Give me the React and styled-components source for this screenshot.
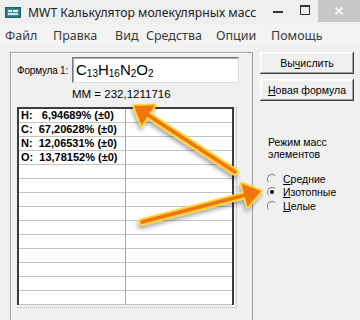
import React from "react";
import styled, { createGlobalStyle } from "styled-components";

const Global = createGlobalStyle`
  html, body { margin: 0; padding: 0; background: #f0f0f0; }
  #root { width: 360px; height: 320px; }
`;

const Window = styled.div`
  position: relative;
  width: 360px;
  height: 320px;
  overflow: hidden;
  background: #f0f0f0;
  display: flex;
  flex-direction: column;
  font-family: "Liberation Sans", Arial, sans-serif;
  color: #000;
`;

const TitleBar = styled.div`
  height: 24px;
  flex: none;
  display: flex;
  align-items: center;
  background: #efefef;
`;

const AppIcon = styled.svg`
  margin-left: 5px;
  width: 16px;
  height: 11px;
  flex: none;
`;

const Title = styled.div`
  margin-left: 7px;
  font-family: "Noto Sans", sans-serif;
  font-size: 12.2px;
  color: #222;
  white-space: nowrap;
  flex: 1;
`;

const CtrlBtn = styled.div`
  width: ${(p) => p.$w}px;
  height: 22px;
  align-self: flex-start;
  display: flex;
  align-items: center;
  justify-content: center;
  background: ${(p) => (p.$close ? "#c7c7c7" : "transparent")};
`;

const MinGlyph = styled.div`
  width: 10px;
  height: 2px;
  background: #333;
  margin-top: 2px;
`;

const MaxGlyph = styled.div`
  width: 8px;
  height: 7px;
  border: 1px solid #333;
  border-top-width: 2px;
  margin-top: -2px;
`;

const CloseGlyph = styled.svg`
  width: 8px;
  height: 8px;
`;

const MenuBar = styled.div`
  height: 22px;
  flex: none;
  display: flex;
  align-items: center;
  padding-left: 5px;
  background: #f3f3f3;
  font-family: "Noto Sans", sans-serif;
  font-size: 12.5px;
  color: #3a3a3a;
`;

const MenuItem = styled.span`
  width: ${(p) => (p.$w ? `${p.$w}px` : "auto")};
  flex: none;
  white-space: nowrap;
`;

const Client = styled.div`
  flex: 1;
  display: flex;
  padding-top: 6px;
  padding-left: 10px;
  font-size: 10.5px;
`;

const LeftFrame = styled.div`
  width: 235px;
  border: 1px solid #a0a0a0;
  border-bottom: none;
  box-shadow: inset 1px 1px #fff;
  padding: 4px 0 0 6px;
  display: flex;
  flex-direction: column;
`;

const FormulaRow = styled.div`
  display: flex;
  align-items: center;
`;

const FieldLabel = styled.label`
  width: 55px;
  flex: none;
  font-size: 10px;
  letter-spacing: -0.2px;
  white-space: nowrap;
`;

const FormulaInput = styled.div`
  width: 162px;
  height: 24px;
  background: #fff;
  border: 1px solid;
  border-color: #7a7a7a #dcdcdc #dcdcdc #7a7a7a;
  box-shadow: inset 1px 1px #a8a8a8;
  padding: 0 0 0 3px;
  font-size: 15px;
  line-height: 23px;
  white-space: nowrap;
  sub {
    font-size: 10px;
    vertical-align: -2px;
    line-height: 0;
  }
`;

const MassLine = styled.div`
  margin: 4px 0 0 55px;
  height: 14px;
  line-height: 14px;
  font-size: 11.5px;
  white-space: nowrap;
`;

const GridWrap = styled.div`
  margin-top: 6px;
  width: 219px;
  border-right: 1px dotted #b0b0b0;
  border-bottom: 1px dotted #b0b0b0;
  padding-bottom: 2px;
`;

const Grid = styled.div`
  width: 213px;
  display: grid;
  grid-template-columns: 1fr 1fr;
  background: #fff;
  border: 2px solid #3c3c3c;
  border-bottom: none;
`;

const Cell = styled.div`
  height: 13px;
  border-bottom: 1px solid #c4c4c4;
  border-right: ${(p) => (p.$first ? "1px solid #a8a8a8" : "none")};
  padding-left: 2px;
  font-size: 11px;
  font-weight: bold;
  line-height: 13px;
  white-space: pre;
  overflow: hidden;
`;

const RightPanel = styled.div`
  margin-left: 7px;
  width: 94px;
  display: flex;
  flex-direction: column;
`;

const PushButton = styled.button`
  width: 94px;
  height: 22px;
  margin-bottom: 5px;
  padding: 0;
  background: #f0f0f0;
  border: none;
  box-shadow: inset -1px -1px #404040, inset 1px 1px #fff, inset -2px -2px #a0a0a0, inset 2px 2px #f8f8f8;
  font-family: "Liberation Sans", Arial, sans-serif;
  font-size: 10.5px;
  color: #000;
  u { text-decoration: underline; text-underline-offset: 1px; }
`;

const ModeLabel = styled.div`
  margin: 30px 0 0 8px;
  font-size: 10.5px;
  line-height: 12px;
`;

const RadioList = styled.div`
  margin: 12px 0 0 7px;
  display: flex;
  flex-direction: column;
`;

const RadioRow = styled.div`
  height: 13.5px;
  display: flex;
  align-items: center;
  font-size: 10.5px;
  u { text-decoration: underline; text-underline-offset: 1px; }
`;

const RadioCircle = styled.span`
  width: 10px;
  height: 10px;
  box-sizing: border-box;
  border-radius: 50%;
  border: 1px solid;
  border-color: #808080 #f0f0f0 #f0f0f0 #808080;
  background: #f0f0f0;
  margin-right: 6px;
  display: flex;
  align-items: center;
  justify-content: center;
  &::after {
    content: "";
    width: 4px;
    height: 4px;
    border-radius: 50%;
    background: ${(p) => (p.$on ? "#000" : "transparent")};
  }
`;

const Overlay = styled.svg`
  position: absolute;
  left: 0;
  top: 0;
  width: 360px;
  height: 320px;
  pointer-events: none;
`;

function headPoints(tail, tip, len, half) {
  const dx = tip[0] - tail[0];
  const dy = tip[1] - tail[1];
  const l = Math.hypot(dx, dy);
  const ux = dx / l;
  const uy = dy / l;
  const bx = tip[0] - ux * len;
  const by = tip[1] - uy * len;
  const px = -uy;
  const py = ux;
  return {
    base: [bx, by],
    pts: `${tip[0]},${tip[1]} ${bx + px * half},${by + py * half} ${bx - px * half},${by - py * half}`,
  };
}

function Arrow({ tail, tip }) {
  const h = headPoints(tail, tip, 17, 12);
  return (
    <g filter="url(#shadow)">
      <line x1={tail[0]} y1={tail[1]} x2={h.base[0]} y2={h.base[1]} stroke="#ffd43a" strokeWidth="7.5" strokeLinecap="round" />
      <polygon points={h.pts} fill="#ffd43a" stroke="#ffd43a" strokeWidth="3.5" strokeLinejoin="round" />
      <line x1={tail[0]} y1={tail[1]} x2={h.base[0]} y2={h.base[1]} stroke="#f07408" strokeWidth="3.5" strokeLinecap="round" />
      <polygon points={h.pts} fill="#f07408" />
    </g>
  );
}

const rows = [
  ["H:   6,94689% (±0)", ""],
  ["C:  67,20628% (±0)", ""],
  ["N:  12,06531% (±0)", ""],
  ["O:  13,78152% (±0)", ""],
];
while (rows.length < 14) rows.push(["", ""]);

export default function App() {
  return (
    <>
      <Global />
      <Window>
        <TitleBar>
          <AppIcon viewBox="0 0 16 11">
            <rect x="0" y="0" width="16" height="11" fill="#1f5f66" />
            <rect x="1.5" y="1.5" width="13" height="8" fill="#3f8f95" />
            <rect x="3" y="3" width="4" height="2" fill="#e8f4f4" />
            <rect x="8" y="3" width="5" height="2" fill="#e8f4f4" />
            <rect x="3" y="6" width="10" height="2" fill="#cfe6e6" />
          </AppIcon>
          <Title>MWT Калькулятор молекулярных масс</Title>
          <CtrlBtn $w={28}><MinGlyph /></CtrlBtn>
          <CtrlBtn $w={26}><MaxGlyph /></CtrlBtn>
          <CtrlBtn $w={42} $close>
            <CloseGlyph viewBox="0 0 8 8">
              <path d="M0.5 0.5 L7.5 7.5 M7.5 0.5 L0.5 7.5" stroke="#fff" strokeWidth="1.6" />
            </CloseGlyph>
          </CtrlBtn>
        </TitleBar>
        <MenuBar>
          <MenuItem $w={48}>Файл</MenuItem>
          <MenuItem $w={62}>Правка</MenuItem>
          <MenuItem $w={31}>Вид</MenuItem>
          <MenuItem $w={70}>Средства</MenuItem>
          <MenuItem $w={55}>Опции</MenuItem>
          <MenuItem>Помощь</MenuItem>
        </MenuBar>
        <Client>
          <LeftFrame>
            <FormulaRow>
              <FieldLabel>Формула 1:</FieldLabel>
              <FormulaInput>
                C<sub>13</sub>H<sub>16</sub>N<sub>2</sub>O<sub>2</sub>
              </FormulaInput>
            </FormulaRow>
            <MassLine>MM = 232,1211716</MassLine>
            <GridWrap>
              <Grid>
                {rows.map((r, i) => (
                  <React.Fragment key={i}>
                    <Cell $first>{r[0]}</Cell>
                    <Cell>{r[1]}</Cell>
                  </React.Fragment>
                ))}
              </Grid>
            </GridWrap>
          </LeftFrame>
          <RightPanel>
            <PushButton>Вы<u>ч</u>ислить</PushButton>
            <PushButton><u>Н</u>овая формула</PushButton>
            <ModeLabel>
              Режим масс
              <br />
              элементов
            </ModeLabel>
            <RadioList>
              <RadioRow><RadioCircle /><span><u>С</u>редние</span></RadioRow>
              <RadioRow><RadioCircle $on /><span><u>И</u>зотопные</span></RadioRow>
              <RadioRow><RadioCircle /><span><u>Ц</u>елые</span></RadioRow>
            </RadioList>
          </RightPanel>
        </Client>
        <Overlay viewBox="0 0 360 320">
          <defs>
            <filter id="shadow" x="-20%" y="-20%" width="140%" height="160%">
              <feGaussianBlur in="SourceAlpha" stdDeviation="2" />
              <feOffset dx="-1" dy="3" result="b" />
              <feComponentTransfer>
                <feFuncA type="linear" slope="0.35" />
              </feComponentTransfer>
              <feMerge>
                <feMergeNode />
                <feMergeNode in="SourceGraphic" />
              </feMerge>
            </filter>
          </defs>
          <Arrow tail={[235, 172]} tip={[134, 106]} />
          <Arrow tail={[142, 222]} tip={[261, 191]} />
        </Overlay>
      </Window>
    </>
  );
}
